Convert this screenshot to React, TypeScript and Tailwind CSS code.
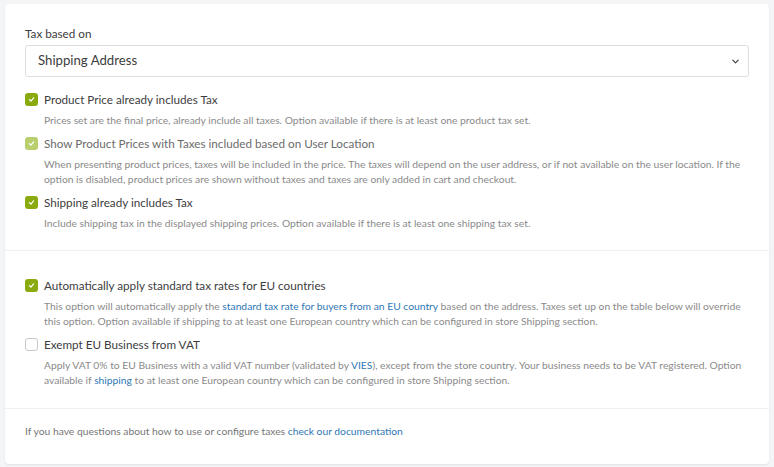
import type { ReactNode } from 'react';

function Check({ checked, faded }: { checked: boolean; faded?: boolean }) {
  if (!checked) {
    return <span className="h-[13px] w-[13px] shrink-0 rounded-[3px] border border-[#c8c8c8] bg-white" />;
  }
  return (
    <span
      className={`flex h-[13px] w-[13px] shrink-0 items-center justify-center rounded-[3px] ${
        faded ? 'bg-[#b9cf6e]' : 'bg-[#8aab0f]'
      }`}
    >
      <svg viewBox="0 0 10 10" className="h-[7px] w-[7px]" fill="none">
        <path d="M2 5.2 L4.2 7.2 L8 2.8" stroke="white" strokeWidth="1.8" strokeLinecap="round" strokeLinejoin="round" />
      </svg>
    </span>
  );
}

function Option({
  label,
  checked,
  faded,
  children,
}: {
  label: string;
  checked: boolean;
  faded?: boolean;
  children: ReactNode;
}) {
  return (
    <div>
      <label className="flex h-4 items-center gap-[6px]">
        <Check checked={checked} faded={faded} />
        <span className={`text-[11.7px] leading-4 ${faded ? 'text-[#6b6b6b]' : 'text-[#3d3d3d]'}`}>{label}</span>
      </label>
      <p className="mt-[5.5px] pl-[19px] text-[10.3px] leading-[15px] text-[#8a8a8a]">{children}</p>
    </div>
  );
}

const A = ({ children }: { children: ReactNode }) => <a className="text-[#2f78b5]">{children}</a>;

export default function App() {
  return (
    <div className="min-h-[467px] bg-[#f4f5f7] pt-1 pl-[5px] pr-[5px] font-['Lato',sans-serif]">
      <div className="rounded-[4px] bg-white shadow-[0_1px_2px_rgba(0,0,0,0.08)]">
        <section className="px-5 pb-[19.5px] pt-[21px]">
          <div className="mb-1 text-[11.7px] leading-4 text-[#3d3d3d]">Tax based on</div>
          <div className="flex h-[32px] items-center justify-between rounded-[3px] border border-[#dedede] pl-3 pr-2">
            <span className="text-[13.2px] text-[#3d3d3d]">Shipping Address</span>
            <svg viewBox="0 0 10 10" className="h-[9px] w-[9px]" fill="none">
              <path d="M2 3.5 L5 6.5 L8 3.5" stroke="#444" strokeWidth="1.4" strokeLinecap="round" strokeLinejoin="round" />
            </svg>
          </div>
          <div className="mt-[14px] flex flex-col gap-[7.5px]">
            <Option label="Product Price already includes Tax" checked>
              Prices set are the final price, already include all taxes. Option available if there is at least one product tax set.
            </Option>
            <Option label="Show Product Prices with Taxes included based on User Location" checked faded>
              When presenting product prices, taxes will be included in the price. The taxes will depend on the user address, or if not
              available on the user location. If the option is disabled, product prices are shown without taxes and taxes are only added
              in cart and checkout.
            </Option>
            <Option label="Shipping already includes Tax" checked>
              Include shipping tax in the displayed shipping prices. Option available if there is at least one shipping tax set.
            </Option>
          </div>
        </section>
        <div className="h-px bg-[#f0f0f0]" />
        <section className="flex flex-col gap-[7.5px] px-5 pb-[20.5px] pt-[26px]">
          <Option label="Automatically apply standard tax rates for EU countries" checked>
            This option will automatically apply the <A>standard tax rate for buyers from an EU country</A> based on the address. Taxes
            set up on the table below will override this option. Option available if shipping to at least one European country which can
            be configured in store Shipping section.
          </Option>
          <Option label="Exempt EU Business from VAT" checked={false}>
            Apply VAT 0% to EU Business with a valid VAT number (validated by <A>VIES</A>), except from the store country. Your business
            needs to be VAT registered. Option available if <A>shipping</A> to at least one European country which can be configured in
            store Shipping section.
          </Option>
        </section>
        <div className="h-px bg-[#f0f0f0]" />
        <footer className="px-5 pb-[24.5px] pt-[15px] text-[10.3px] leading-[15px] text-[#777]">
          If you have questions about how to use or configure taxes <A>check our documentation</A>
        </footer>
      </div>
    </div>
  );
}
